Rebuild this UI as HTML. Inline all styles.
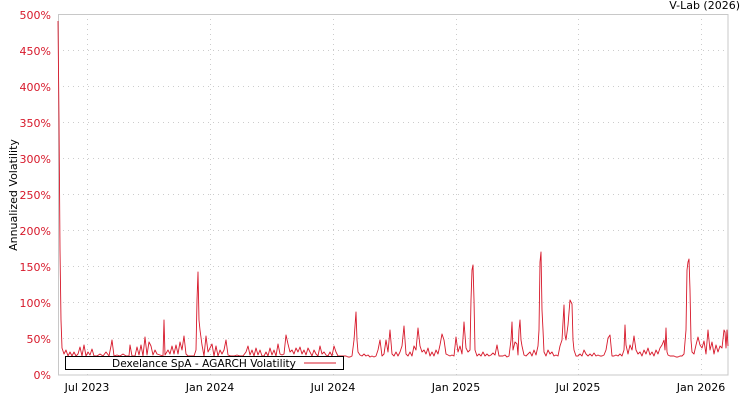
<!DOCTYPE html>
<html><head><meta charset="utf-8"><style>
html,body{margin:0;padding:0;background:#fff;width:750px;height:400px;overflow:hidden}
svg{display:block;font-family:"DejaVu Sans","Liberation Sans",sans-serif}
</style></head><body>
<svg width="750" height="400" viewBox="0 0 750 400">
<text x="740" y="9" font-size="11" text-anchor="end" fill="#000">V-Lab (2026)</text>
<g stroke="#ccc" stroke-width="1" stroke-dasharray="1,4">
<line x1="58" x2="728" y1="50.5" y2="50.5"/><line x1="58" x2="728" y1="86.5" y2="86.5"/>
<line x1="58" x2="728" y1="122.5" y2="122.5"/><line x1="58" x2="728" y1="158.5" y2="158.5"/>
<line x1="58" x2="728" y1="194.5" y2="194.5"/><line x1="58" x2="728" y1="230.5" y2="230.5"/>
<line x1="58" x2="728" y1="266.5" y2="266.5"/><line x1="58" x2="728" y1="302.5" y2="302.5"/>
<line x1="58" x2="728" y1="338.5" y2="338.5"/>
<line x1="87.5" x2="87.5" y1="14" y2="375"/><line x1="210.5" x2="210.5" y1="14" y2="375"/>
<line x1="333.5" x2="333.5" y1="14" y2="375"/><line x1="456.5" x2="456.5" y1="14" y2="375"/>
<line x1="578.5" x2="578.5" y1="14" y2="375"/><line x1="701.5" x2="701.5" y1="14" y2="375"/>
</g>
<rect x="58.5" y="14.5" width="669.5" height="360.5" fill="none" stroke="#c8c8c8"/>
<g font-size="11" fill="#d7182a" text-anchor="end">
<text x="51" y="19">500%</text><text x="51" y="55">450%</text><text x="51" y="91">400%</text>
<text x="51" y="127">350%</text><text x="51" y="163">300%</text><text x="51" y="199">250%</text>
<text x="51" y="235">200%</text><text x="51" y="271">150%</text><text x="51" y="307">100%</text>
<text x="51" y="343">50%</text><text x="51" y="379">0%</text>
</g>
<g font-size="11" fill="#000" text-anchor="middle">
<text x="87" y="391">Jul 2023</text><text x="210" y="391">Jan 2024</text>
<text x="333" y="391">Jul 2024</text><text x="456" y="391">Jan 2025</text>
<text x="578" y="391">Jul 2025</text><text x="701" y="391">Jan 2026</text>
</g>
<text transform="translate(17,195) rotate(-90)" font-size="11" text-anchor="middle" fill="#000">Annualized Volatility</text>
<polyline fill="none" stroke="#d7182a" stroke-width="0.9" stroke-linejoin="round" points="
58,21 59,120 60,250 61,320 62,348 64,354 66,350 68,356 70,352 72,356 74,352 76,356 78,354 80,347 82,356 84,345 86,356 88,352 90,355 92,349 94,356 97,356 100,354 103,356 106,352 109,356 111,346 112,340 114,356 117,355 120,356 123,354 126,356 129,356 130,345 132,356 135,356 137,347 139,355 141,345 143,356 145,337 147,355 149,342 151,346 153,355 155,350 157,354 160,355 163,356 164,320 165,355 168,350 170,354 172,346 174,354 176,345 178,354 180,342 182,350 184,336 186,354 188,356 190,356 192,356 194,356 196,350 197,300 198,272 199,320 200,330 202,345 204,356 206,336 208,352 210,348 212,344 214,356 216,346 218,356 220,350 222,354 224,350 226,340 228,355 231,356 234,356 237,355 240,356 243,356 246,352 248,346 250,355 252,350 254,356 256,348 258,355 260,350 262,356 264,356 266,352 268,356 270,348 272,355 274,350 276,356 278,344 280,354 282,355 284,354 286,335 288,344 290,352 292,350 294,354 296,348 298,352 300,347 302,354 304,350 306,355 308,348 310,352 312,356 314,350 316,354 318,356 320,346 322,354 324,352 326,355 328,356 330,352 332,356 334,346 336,352 338,356 340,356 342,356 344,356 346,356 348,357 350,357 352,356 354,340 356,312 357,340 358,352 360,355 362,356 364,354 366,356 368,355 370,357 372,356 374,357 376,356 378,350 380,340 382,356 384,354 386,340 388,352 390,330 392,354 394,356 396,352 398,356 400,352 402,346 404,326 406,354 408,356 410,352 412,356 414,346 416,350 418,328 420,346 422,352 424,350 426,354 428,348 430,356 432,352 434,356 436,350 438,354 440,345 442,334 444,340 446,354 448,355 450,356 452,355 454,356 456,337 458,352 460,346 462,354 464,322 466,348 468,352 470,350 471,300 472,270 473,265 474,300 475,350 477,356 479,354 481,356 483,352 485,356 487,354 489,356 491,355 493,353 495,355 497,345 499,356 501,356 503,356 505,355 507,357 509,356 511,340 512,322 513,350 515,342 517,344 518,355 519,330 520,320 521,340 522,346 524,355 526,356 528,354 530,352 532,356 534,350 536,355 538,346 539,330 540,262 541,252 542,310 543,330 544,352 546,356 548,350 550,354 552,352 554,356 556,355 558,356 560,346 562,340 564,305 565,335 566,340 568,325 570,300 572,304 573,340 574,350 576,356 578,356 580,354 582,356 584,350 586,354 588,356 590,354 592,356 594,353 596,356 598,355 600,356 602,356 604,355 606,350 608,338 610,335 612,356 614,356 616,355 618,356 620,354 622,356 624,350 625,325 626,345 628,354 630,345 632,350 634,336 636,350 638,354 640,352 642,356 644,350 646,354 648,348 650,355 652,352 654,356 656,350 658,354 660,348 662,345 664,340 665,350 666,328 667,352 668,355 670,356 672,356 674,356 676,357 678,357 680,356 682,356 684,354 686,330 687,270 688,262 689,259 690,290 691,340 692,352 694,354 696,345 698,337 700,345 702,348 704,341 706,354 708,330 710,350 712,342 714,354 716,345 718,352 720,346 722,348 724,330 725,332 726,348 727,330 728,346"/>
<rect x="65.5" y="356.5" width="278" height="13" fill="#fff" stroke="#000"/>
<text x="204" y="367" font-size="10.6" text-anchor="middle" fill="#000">Dexelance SpA - AGARCH Volatility</text>
<line x1="304" x2="336" y1="363" y2="363" stroke="#d7182a" stroke-width="1"/>
</svg>
</body></html>
